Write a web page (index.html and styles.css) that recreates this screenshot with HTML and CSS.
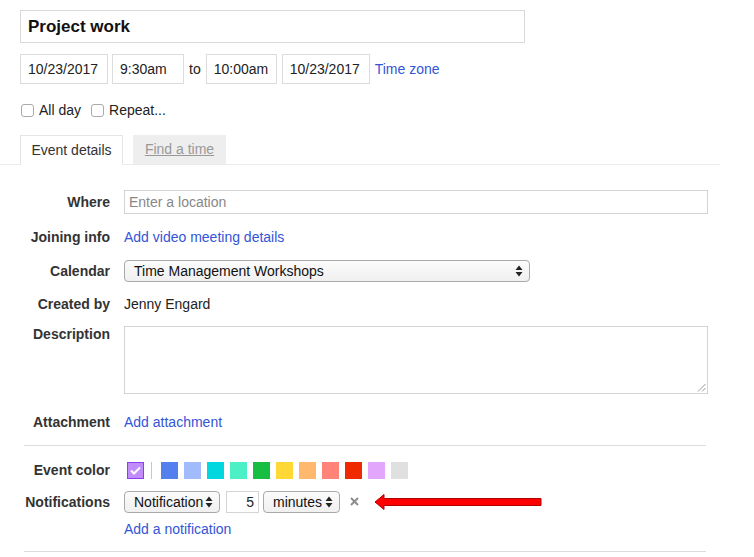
FILE: index.html
```
<!DOCTYPE html>
<html>
<head>
<meta charset="utf-8">
<link rel="stylesheet" href="styles.css">
</head>
<body>
<div class="page">
  <div class="title-box">Project work</div>

  <div class="date-row">
    <div class="field f-date">10/23/2017</div>
    <div class="field f-time">9:30am</div>
    <span class="to">to</span>
    <div class="field f-time2">10:00am</div>
    <div class="field f-date">10/23/2017</div>
    <a class="link tz">Time zone</a>
  </div>

  <div class="check-row">
    <span class="cb"></span><span class="cb-label">All day</span>
    <span class="cb"></span><span class="cb-label">Repeat...</span>
  </div>

  <div class="tabs">
    <div class="tab active">Event details</div>
    <div class="tab inactive"><span>Find a time</span></div>
  </div>

  <div class="form">
    <div class="row r-where">
      <div class="label">Where</div>
      <div class="input wide">Enter a location</div>
    </div>
    <div class="row r-join">
      <div class="label">Joining info</div>
      <a class="link">Add video meeting details</a>
    </div>
    <div class="row r-cal">
      <div class="label">Calendar</div>
      <div class="select cal-select"><span>Time Management Workshops</span>
        <svg class="updown" width="8" height="12" viewBox="0 0 8 12"><path d="M4 0.5 L7.5 5 H0.5 Z M4 11.5 L7.5 7 H0.5 Z" fill="#222"/></svg>
      </div>
    </div>
    <div class="row r-created">
      <div class="label">Created by</div>
      <div class="value">Jenny Engard</div>
    </div>
    <div class="row r-desc">
      <div class="label">Description</div>
      <div class="textarea">
        <svg class="grip" width="9" height="9" viewBox="0 0 9 9"><path d="M8.5 1 L1 8.5 M8.5 5 L5 8.5" stroke="#999" stroke-width="1"/></svg>
      </div>
    </div>
    <div class="row r-attach">
      <div class="label">Attachment</div>
      <a class="link">Add attachment</a>
    </div>
    <div class="hr hr1"></div>
    <div class="row r-color">
      <div class="label">Event color</div>
      <div class="swatches">
        <span class="sw checked">
          <svg width="11" height="9" viewBox="0 0 11 9"><path d="M1 4.5 L4 7.5 L10 1.5" stroke="#fff" stroke-width="2" fill="none"/></svg>
        </span>
        <span class="sep"></span>
        <span class="sw" style="background:#5480ef"></span>
        <span class="sw" style="background:#a2bbfd"></span>
        <span class="sw" style="background:#00d7df"></span>
        <span class="sw" style="background:#4cf0c5"></span>
        <span class="sw" style="background:#17be42"></span>
        <span class="sw" style="background:#ffd835"></span>
        <span class="sw" style="background:#ffb86d"></span>
        <span class="sw" style="background:#ff8378"></span>
        <span class="sw" style="background:#f02a00"></span>
        <span class="sw" style="background:#e2a6fc"></span>
        <span class="sw" style="background:#e0e0e0"></span>
      </div>
    </div>
    <div class="row r-notif">
      <div class="label">Notifications</div>
      <div class="notif">
        <div class="select s-notif"><span>Notification</span>
          <svg class="updown" width="8" height="12" viewBox="0 0 8 12"><path d="M4 0.5 L7.5 5 H0.5 Z M4 11.5 L7.5 7 H0.5 Z" fill="#222"/></svg>
        </div>
        <div class="num">5</div>
        <div class="select s-min"><span>minutes</span>
          <svg class="updown" width="8" height="12" viewBox="0 0 8 12"><path d="M4 0.5 L7.5 5 H0.5 Z M4 11.5 L7.5 7 H0.5 Z" fill="#222"/></svg>
        </div>
        <svg class="x" width="9" height="9" viewBox="0 0 9 9"><path d="M1 1 L8 8 M8 1 L1 8" stroke="#8c8c8c" stroke-width="2"/></svg>
        <svg class="arrow" width="170" height="18" viewBox="0 0 170 18"><path d="M1 9 L10 1.5 L10 5.5 L167 5.5 L167 12.5 L10 12.5 L10 16.5 Z" fill="#ff0000" stroke="#b00000" stroke-width="1"/></svg>
      </div>
    </div>
    <div class="row r-add">
      <div class="label"></div>
      <a class="link">Add a notification</a>
    </div>
    <div class="hr hr2"></div>
  </div>
</div>
</body>
</html>
```
FILE: styles.css
```
html, body {
  margin: 0;
  padding: 0;
  background: #fff;
}
body {
  font-family: "Liberation Sans", Arial, sans-serif;
  font-size: 14px;
  color: #222;
}
.page {
  position: relative;
  width: 754px;
  height: 557px;
  overflow: hidden;
  padding-top: 10px;
  box-sizing: border-box;
}
.link {
  color: #3355d6;
  text-decoration: none;
}
.title-box {
  margin-left: 20px;
  width: 505px;
  height: 33px;
  box-sizing: border-box;
  border: 1px solid #d9d9d9;
  padding-left: 7px;
  font-size: 17px;
  font-weight: bold;
  color: #111;
  line-height: 31px;
}
.date-row {
  display: flex;
  align-items: center;
  margin-top: 11px;
  margin-left: 20px;
  height: 30px;
}
.field {
  height: 30px;
  box-sizing: border-box;
  border: 1px solid #dcdcdc;
  line-height: 28px;
  padding-left: 7px;
  color: #222;
}
.f-date { width: 88px; }
.f-time { width: 72px; margin-left: 4px; }
.f-time2 { width: 71px; }
.f-time2 + .f-date { margin-left: 5px; }
.to { margin: 0 5px 0 5px; }
.tz { margin-left: 5px; }
.check-row {
  display: flex;
  align-items: center;
  margin-top: 18px;
  margin-left: 21px;
  height: 16px;
}
.cb {
  width: 11px;
  height: 11px;
  border: 1px solid #aaa;
  border-radius: 3px;
  background: #fff;
}
.cb-label { margin-left: 5px; margin-right: 10px; }
.tabs {
  display: flex;
  margin-top: 17px;
  width: 720px;
  height: 30px;
  box-sizing: border-box;
  border-bottom: 1px solid #ebebeb;
  padding-left: 20px;
}
.tab {
  height: 29px;
  box-sizing: border-box;
  line-height: 28px;
  text-align: center;
}
.tab.active {
  width: 103px;
  border: 1px solid #e5e5e5;
  border-bottom: none;
  background: #fff;
  color: #333;
  height: 30px;
  position: relative;
  z-index: 1;
}
.tab.inactive {
  width: 93px;
  margin-left: 10px;
  background: #eeeeee;
  color: #999;
}
.tab.inactive span { text-decoration: underline; }

.form {
  padding-top: 25px;
}
.row {
  display: flex;
  align-items: center;
}
.label {
  width: 110px;
  flex: none;
  text-align: right;
  font-weight: bold;
  color: #333;
  margin-right: 14px;
}
.value { color: #222; }
.input {
  height: 24px;
  box-sizing: border-box;
  border: 1px solid #d4d4d4;
  line-height: 22px;
  padding-left: 4px;
  color: #888;
}
.input.wide { width: 584px; }
.r-where { height: 24px; }
.r-join { height: 24px; margin-top: 11px; }
.r-cal { height: 22px; margin-top: 11px; }
.r-created { height: 22px; margin-top: 11px; }
.r-desc { height: 68px; margin-top: 11px; align-items: flex-start; }
.r-desc .label { line-height: 16px; }
.r-attach { height: 22px; margin-top: 17px; }
.r-color { height: 24px; margin-top: 12px; }
.r-notif { height: 22px; margin-top: 9px; }
.r-add { height: 22px; margin-top: 5px; }

.select {
  position: relative;
  height: 22px;
  box-sizing: border-box;
  border: 1px solid #a9a9a9;
  border-radius: 4px;
  background: linear-gradient(#fbfbfb, #f0f0f0);
  line-height: 20px;
  padding-left: 9px;
  color: #111;
  display: flex;
  align-items: center;
}
.cal-select { width: 406px; }
.updown { position: absolute; right: 6px; top: 4px; }
.textarea {
  position: relative;
  width: 584px;
  height: 68px;
  box-sizing: border-box;
  border: 1px solid #d4d4d4;
}
.grip { position: absolute; right: 1px; bottom: 1px; }
.hr {
  margin-left: 24px;
  width: 682px;
  height: 1px;
  background: #dcdcdc;
}
.hr1 { margin-top: 12px; }
.hr2 { margin-top: 11px; }
.swatches {
  display: flex;
  align-items: center;
  margin-left: 3px;
}
.sw {
  width: 17px;
  height: 17px;
  margin-right: 6px;
  box-sizing: border-box;
}
.sw.checked {
  background: #c18cfb;
  border: 1px solid #8a3fe8;
  display: flex;
  align-items: center;
  justify-content: center;
  margin-right: 7px;
}
.sep {
  width: 1px;
  height: 17px;
  background: #c8c8c8;
  margin-right: 9px;
}
.notif {
  display: flex;
  align-items: center;
}
.s-notif { width: 96px; }
.num {
  width: 33px;
  height: 22px;
  box-sizing: border-box;
  border: 1px solid #d4d4d4;
  line-height: 20px;
  text-align: right;
  padding-right: 4px;
  margin-left: 6px;
  margin-right: 4px;
}
.s-min { width: 77px; }
.x {
  margin-left: 10px;
  margin-top: -2px;
}
.arrow { margin-left: 15px; }
```
